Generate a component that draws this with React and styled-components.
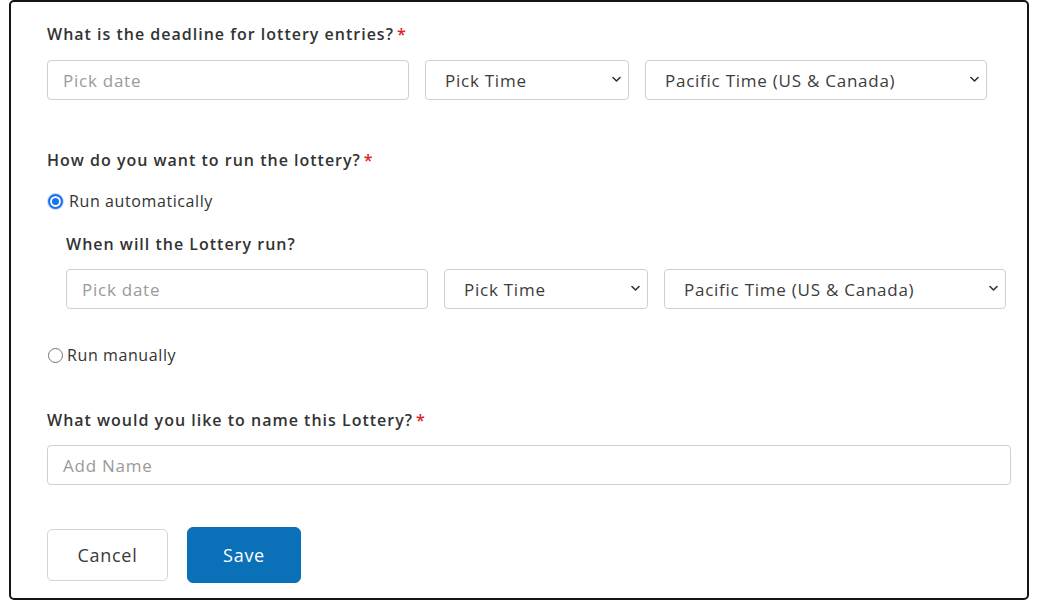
import React, { useState } from 'react'
import styled, { createGlobalStyle } from 'styled-components'

const textColor = '#333333'
const borderColor = '#cfcfcf'
const fontStack = '"Open Sans", "Noto Sans", Arial, sans-serif'

const GlobalStyle = createGlobalStyle`
  html, body {
    margin: 0;
    padding: 0;
    background: #ffffff;
  }
  body {
    font-family: ${fontStack};
    color: ${textColor};
  }
  * {
    box-sizing: border-box;
  }
`

const Frame = styled.div`
  margin: 0 9px;
  width: 1020px;
  height: 600px;
  border: 2px solid #141414;
  border-radius: 5px;
  padding: 22px 0 0 36px;
  display: flex;
  flex-direction: column;
`

const Label = styled.div`
  font-size: 16px;
  line-height: 20px;
  font-weight: 600;
  letter-spacing: 1px;
  color: ${textColor};
  margin-top: ${props => props.top || 0}px;
  margin-left: ${props => props.indent || 0}px;
`

const Required = styled.span`
  color: #e0201b;
  margin-left: 3px;
`

const FieldRow = styled.div`
  display: grid;
  grid-template-columns: 362px 204px 342px;
  column-gap: 16px;
  margin-top: ${props => props.top || 0}px;
  margin-left: ${props => props.indent || 0}px;
`

const TextInput = styled.input`
  width: ${props => props.width || '100%'};
  height: 40px;
  border: 1px solid ${borderColor};
  border-radius: 4px;
  padding: 0 15px;
  font-family: ${fontStack};
  font-size: 17px;
  letter-spacing: 0.75px;
  color: ${textColor};
  background: #fff;
  outline: none;
  margin-top: ${props => props.top || 0}px;

  &::placeholder {
    color: #9a9a9a;
  }
`

const SelectWrap = styled.div`
  position: relative;
  height: 40px;
`

const Select = styled.select`
  appearance: none;
  -webkit-appearance: none;
  width: 100%;
  height: 40px;
  border: 1px solid ${borderColor};
  border-radius: 4px;
  padding: 0 30px 0 19px;
  font-family: ${fontStack};
  font-size: 17px;
  letter-spacing: 0.75px;
  color: #3c3c3c;
  background: #fff;
  outline: none;
`

const Chevron = styled.svg`
  position: absolute;
  right: 8px;
  top: 16px;
  width: 9px;
  height: 7px;
  pointer-events: none;
`

const RadioRow = styled.label`
  display: flex;
  align-items: center;
  height: 20px;
  gap: ${props => props.gap || 6}px;
  margin-top: ${props => props.top || 0}px;
  font-size: 16px;
  letter-spacing: 0.6px;
  color: ${textColor};
  cursor: pointer;
`

const Radio = styled.input`
  appearance: none;
  -webkit-appearance: none;
  margin: 0 0 0 1px;
  width: 15px;
  height: 15px;
  border-radius: 50%;
  border: 1px solid #767676;
  background: #fff;

  &:checked {
    border: 2px solid #1a73f0;
    background: #1a73f0;
    box-shadow: inset 0 0 0 2px #fff, 0 0 0 1px rgba(26, 115, 240, 0.25);
  }
`

const Buttons = styled.div`
  display: flex;
  align-items: center;
  gap: 19px;
  margin-top: 42px;
`

const Button = styled.button`
  font-family: ${fontStack};
  font-size: 18px;
  letter-spacing: 0.7px;
  border-radius: ${props => props.primary ? 6 : 5}px;
  width: ${props => props.primary ? 114 : 121}px;
  height: ${props => props.primary ? 56 : 52}px;
  border: 1px solid ${props => props.primary ? '#0a71b8' : '#d4d4d4'};
  background: ${props => props.primary ? '#0a71b8' : '#fff'};
  color: ${props => props.primary ? '#fff' : '#3a3a3a'};
  cursor: pointer;
`

function ChevronIcon () {
  return (
    <Chevron viewBox='0 0 9 7'>
      <path d='M1 1.5 L4.5 5 L8 1.5' fill='none' stroke='#333' strokeWidth='1.6' strokeLinecap='round' strokeLinejoin='round' />
    </Chevron>
  )
}

function DropDown ({ value, options }) {
  return (
    <SelectWrap>
      <Select defaultValue={value}>
        {options.map(o => <option key={o} value={o}>{o}</option>)}
      </Select>
      <ChevronIcon />
    </SelectWrap>
  )
}

const timeOptions = ['Pick Time', '9:00 AM', '12:00 PM', '5:00 PM']
const zoneOptions = ['Pacific Time (US & Canada)', 'Mountain Time (US & Canada)', 'Central Time (US & Canada)', 'Eastern Time (US & Canada)']

function DateTimeRow ({ top, indent }) {
  return (
    <FieldRow top={top} indent={indent}>
      <TextInput placeholder='Pick date' />
      <DropDown value='Pick Time' options={timeOptions} />
      <DropDown value='Pacific Time (US & Canada)' options={zoneOptions} />
    </FieldRow>
  )
}

export default function App () {
  const [mode, setMode] = useState('auto')

  return (
    <>
      <GlobalStyle />
      <Frame>
        <Label>What is the deadline for lottery entries?<Required>*</Required></Label>
        <DateTimeRow top={16} />

        <Label top={50}>How do you want to run the lottery?<Required>*</Required></Label>
        <RadioRow top={21}>
          <Radio type='radio' name='mode' checked={mode === 'auto'} onChange={() => setMode('auto')} />
          Run automatically
        </RadioRow>
        <Label top={23} indent={19}>When will the Lottery run?</Label>
        <DateTimeRow top={15} indent={19} />
        <RadioRow top={36} gap={4}>
          <Radio type='radio' name='mode' checked={mode === 'manual'} onChange={() => setMode('manual')} />
          Run manually
        </RadioRow>

        <Label top={45}>What would you like to name this Lottery?<Required>*</Required></Label>
        <TextInput placeholder='Add Name' width='964px' top={15} />

        <Buttons>
          <Button>Cancel</Button>
          <Button primary>Save</Button>
        </Buttons>
      </Frame>
    </>
  )
}
